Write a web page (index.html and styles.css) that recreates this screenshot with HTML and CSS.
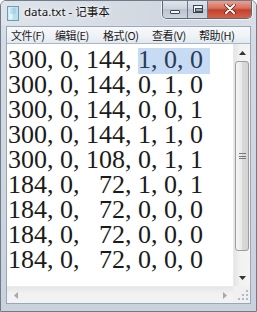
FILE: index.html
```html
<!DOCTYPE html>
<html>
<head>
    <meta charset="utf-8">
    <title>data.txt - 记事本</title>
    <link rel="stylesheet" href="styles.css">
</head>
<body>

<div class="window">
    <div class="titlebar">
        <svg class="app-icon" width="12" height="15" viewBox="0 0 12 15">
            <rect x="0.5" y="0.5" width="11" height="14" fill="#b9e0f0" stroke="#6f9bb5"/>
            <rect x="1.5" y="1.5" width="4" height="12" fill="#e4f4fa"/>
            <path d="M3 3h6M3 5h6M3 7h6" stroke="#8cc0d8" stroke-width="0.8"/>
        </svg>
        <span class="title">data.txt - 记事本</span>
        <div class="caption">
            <div class="cap-btn cap-min"><span class="min-glyph"></span></div>
            <div class="cap-btn cap-max"><span class="max-glyph"></span></div>
            <div class="cap-btn cap-close">
                <svg width="12" height="10" viewBox="0 0 12 10">
                    <path d="M2 1l8 8M10 1l-8 8" stroke="#5a1d14" stroke-width="3.4" stroke-linecap="round"/>
                    <path d="M2 1l8 8M10 1l-8 8" stroke="#ffffff" stroke-width="2" stroke-linecap="round"/>
                </svg>
            </div>
        </div>
    </div>

    <div class="client">
        <div class="menubar">
            <span>文件(F)</span>
            <span>编辑(E)</span>
            <span>格式(O)</span>
            <span>查看(V)</span>
            <span>帮助(H)</span>
        </div>

        <div class="editor">
<pre class="text">300, 0, 144, <span class="sel">1, 0, 0 </span>
300, 0, 144, 0, 1, 0
300, 0, 144, 0, 0, 1
300, 0, 144, 1, 1, 0
300, 0, 108, 0, 1, 1
184, 0,   72, 1, 0, 1
184, 0,   72, 0, 0, 0
184, 0,   72, 0, 0, 0
184, 0,   72, 0, 0, 0</pre>

            <div class="vscroll">
                <div class="sb-btn">
                    <svg width="7" height="4" viewBox="0 0 7 4"><path d="M0 4L3.5 0L7 4z" fill="#333"/></svg>
                </div>
                <div class="thumb"><span class="grip-lines"></span></div>
                <div class="track"></div>
                <div class="sb-btn">
                    <svg width="7" height="4" viewBox="0 0 7 4"><path d="M0 0L3.5 4L7 0z" fill="#333"/></svg>
                </div>
            </div>

            <div class="hscroll">
                <div class="sb-btn">
                    <svg width="4" height="7" viewBox="0 0 4 7"><path d="M4 0L0 3.5L4 7z" fill="#a8a8a8"/></svg>
                </div>
                <div class="track"></div>
                <div class="sb-btn">
                    <svg width="4" height="7" viewBox="0 0 4 7"><path d="M0 0L4 3.5L0 7z" fill="#a8a8a8"/></svg>
                </div>
            </div>

            <div class="sizegrip">
                <svg width="11" height="11" viewBox="0 0 11 11" fill="#b4b9c0">
                    <rect x="8" y="0" width="2" height="2"/>
                    <rect x="4" y="4" width="2" height="2"/>
                    <rect x="8" y="4" width="2" height="2"/>
                    <rect x="0" y="8" width="2" height="2"/>
                    <rect x="4" y="8" width="2" height="2"/>
                    <rect x="8" y="8" width="2" height="2"/>
                </svg>
            </div>
        </div>
    </div>
</div>

</body>
</html>
```

FILE: styles.css
```css
* {
    margin: 0;
    padding: 0;
    box-sizing: border-box;
}
body {
    background: #ffffff;
    font-family: "Noto Sans", "Noto Sans CJK SC", sans-serif;
}
.window {
    width: 257px;
    height: 312px;
    display: flex;
    flex-direction: column;
    background: linear-gradient(180deg, #e2e7ed 0%, #d3dbe4 12%, #c9d2dd 100%);
    border: 1px solid #6f7b89;
    border-radius: 6px 6px 0 0;
    overflow: hidden;
}
.titlebar {
    height: 24px;
    display: flex;
    align-items: flex-start;
    background: linear-gradient(90deg, #dfe4ea 0%, #d6dce4 40%, #cfd6df 70%, #d8dee6 100%);
}
.app-icon {
    margin: 5px 0 0 6px;
}
.title {
    margin: 3px 0 0 5px;
    font-size: 11.5px;
    line-height: 16px;
    color: #111;
    text-shadow: 0 0 6px #ffffff, 0 0 3px #ffffff;
}
.caption {
    margin-left: auto;
    margin-right: 4px;
    margin-top: -1px;
    display: flex;
    border: 1px solid #5d6874;
    border-top: none;
    border-radius: 0 0 5px 5px;
    overflow: hidden;
    box-shadow: 0 0 0 1px rgba(255, 255, 255, 0.6);
}
.cap-btn {
    height: 18px;
    display: flex;
    align-items: center;
    justify-content: center;
}
.cap-min {
    width: 25px;
    background: linear-gradient(180deg, #e3e8ee 0%, #cbd3dc 50%, #b9c3cf 51%, #cdd5de 100%);
    border-right: 1px solid #6d7986;
}
.cap-max {
    width: 20px;
    background: linear-gradient(180deg, #e3e8ee 0%, #cbd3dc 50%, #b9c3cf 51%, #cdd5de 100%);
    border-right: 1px solid #6d7986;
}
.cap-close {
    width: 43px;
    background: linear-gradient(180deg, #e9a99c 0%, #d8705d 45%, #c2422c 55%, #d4614b 100%);
}
.min-glyph {
    width: 10px;
    height: 4px;
    margin-top: 6px;
    background: #f6f8fa;
    border: 1px solid #3b4450;
    border-radius: 1px;
}
.max-glyph {
    width: 10px;
    height: 8px;
    border: 1px solid #3b4450;
    background: #f6f8fa;
    box-shadow: inset 0 2px 0 #f6f8fa, inset 0 0 0 3px #f6f8fa;
    position: relative;
}
.max-glyph::after {
    content: "";
    position: absolute;
    left: 1px;
    top: 2px;
    width: 6px;
    height: 2px;
    background: #9aa6b3;
    border: 1px solid #3b4450;
}
.client {
    flex: 1;
    display: flex;
    flex-direction: column;
    margin: 1px 5px 7px 5px;
    border: 1px solid #9aa7b6;
    background: #ffffff;
}
.menubar {
    height: 16px;
    display: grid;
    grid-template-columns: 44px 48px 49px 47px auto;
    padding-left: 4px;
    align-items: center;
    background: linear-gradient(180deg, #f7f9fb 0%, #eef2f6 60%, #e3e9f0 100%);
    font-family: "Noto Sans CJK SC", sans-serif;
    font-size: 11px;
    letter-spacing: -0.4px;
    color: #1a1a1a;
}
.editor {
    flex: 1;
    display: grid;
    grid-template-columns: 1fr 17px;
    grid-template-rows: 1fr 17px;
    border-top: 1px solid #a9b6c6;
    min-height: 0;
}
.text {
    padding: 3px 0 0 1px;
    font-family: "Liberation Serif", "Times New Roman", serif;
    font-size: 26px;
    line-height: 25px;
    color: #1b1b1b;
    overflow: hidden;
    white-space: pre;
}
.sel {
    background: linear-gradient(180deg, transparent 3px, #c8dbf4 3px);
    color: #2a3a52;
}
.vscroll {
    display: flex;
    flex-direction: column;
    background: linear-gradient(90deg, #e4e4e4 0%, #f2f2f2 40%, #f4f4f4 100%);
    border-left: 1px solid #eaeaea;
}
.sb-btn {
    width: 17px;
    height: 17px;
    display: flex;
    align-items: center;
    justify-content: center;
    flex-shrink: 0;
}
.thumb {
    height: 190px;
    margin: 0 1px 0 1px;
    border: 1px solid #9d9d9d;
    border-radius: 3px;
    background: linear-gradient(90deg, #f4f4f4 0%, #e9e9e9 50%, #d9d9d9 51%, #d4d4d4 100%);
    display: flex;
    align-items: center;
    justify-content: center;
}
.grip-lines {
    width: 7px;
    height: 6px;
    border-top: 1px solid #7a7a7a;
    border-bottom: 1px solid #7a7a7a;
    background: linear-gradient(180deg, transparent 2px, #7a7a7a 2px, #7a7a7a 3px, transparent 3px);
}
.track {
    flex: 1;
}
.hscroll {
    display: flex;
    background: linear-gradient(180deg, #e6e6e6 0%, #f1f1f1 40%, #f3f3f3 100%);
    border-top: 1px solid #ececec;
}
.sizegrip {
    background: #f0f0f0;
    display: flex;
    align-items: flex-end;
    justify-content: flex-end;
    padding: 0 1px 2px 0;
}
```
